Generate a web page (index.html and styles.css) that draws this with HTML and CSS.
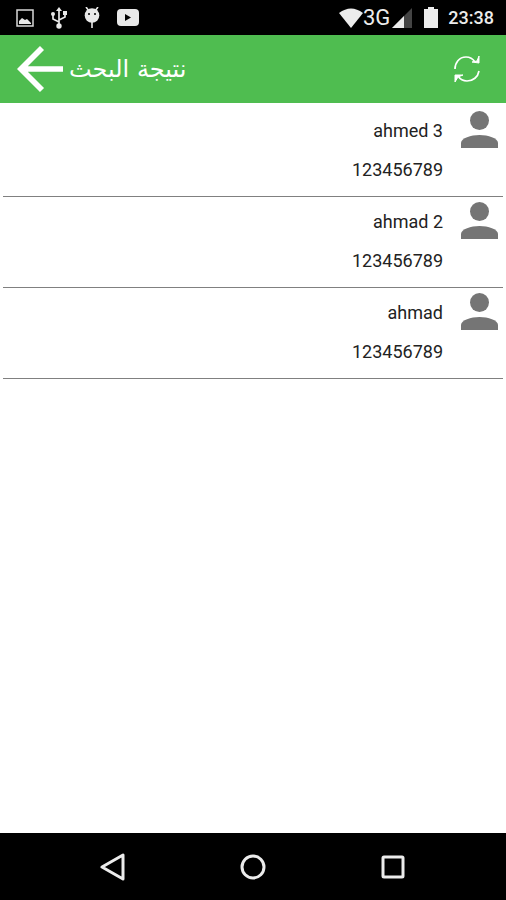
FILE: index.html
```html
<!DOCTYPE html>
<html lang="ar">
<head>
<meta charset="utf-8">
<meta name="viewport" content="width=device-width, initial-scale=1">
<title>نتيجة البحث</title>
<link rel="stylesheet" href="styles.css">
</head>
<body>
<div class="status">
  <div class="notices">
    <svg width="18" height="18" viewBox="0 0 18 18"><path d="M1 1h16v16H1z" fill="none" stroke="#d8d8d8" stroke-width="1.5"/><path d="M3 15v-3l3-3 3 2 2-1 4 4v1z" fill="#e8e8e8"/></svg>
    <svg width="16" height="22" viewBox="0 0 16 22"><path d="M8 3v16M8 15L2 12V7M8 13l6-3V6" fill="none" stroke="#e8e8e8" stroke-width="1.7"/><path d="M8 0l3 4H5z" fill="#e8e8e8"/><circle cx="8" cy="19" r="2.7" fill="#e8e8e8"/><circle cx="2" cy="7" r="2" fill="#e8e8e8"/><path d="M12 4h4v4h-4z" fill="#e8e8e8"/></svg>
    <svg width="16" height="22" viewBox="0 0 16 22"><path d="M2 0l3 4M14 0l-3 4M8 15v6" fill="none" stroke="#e8e8e8" stroke-width="1.6"/><circle cx="8" cy="8.500" r="7.300" fill="#e8e8e8"/><circle cx="5" cy="7" r="1" fill="#000"/><circle cx="11" cy="7" r="1" fill="#000"/></svg>
    <svg width="22" height="17" viewBox="0 0 22 17"><rect width="22" height="17" rx="4" fill="#e8e8e8"/><path d="M8 5l6 3.500-6 3.500z" fill="#000"/></svg>
  </div>
  <div class="system">
    <svg width="24" height="20" viewBox="0 0 24 20"><path d="M0 5Q12-4 24 5L12 20z" fill="#ececec"/></svg>
    <span class="network">3G</span>
    <svg class="signal" width="20" height="20" viewBox="0 0 20 20"><path d="M20 0v20H0z" fill="#444"/><path d="M12 8v12H0z" fill="#ececec"/></svg>
    <svg class="battery" width="14" height="21" viewBox="0 0 14 21"><path d="M4 0h6v2h4v19H0V2h4z" fill="#ececec"/></svg>
    <time class="clock">23:38</time>
  </div>
</div>
<header class="bar">
  <button class="back" type="button" aria-label="رجوع"><svg width="46" height="46" viewBox="0 0 46 46"><path d="M25 2L4 23l21 21M4 23h42" fill="none" stroke="#fff" stroke-width="5.700"/></svg></button>
  <h1 class="title" dir="rtl">نتيجة البحث</h1>
  <button class="refresh" type="button" aria-label="تحديث"><svg width="26" height="26" viewBox="0 0 26 26" fill="none" stroke="#fff" stroke-width="1.700"><path d="M1 13C1 7 5 1 12 1c4 0 7 2 9 5M25 15c-1 6-6 10-12 10-4 0-7-2-9-5"/><path d="M25 0v7l-7-1 5-1zM1 26v-7l8 0-5 2z" fill="#fff" stroke-width="1"/></svg></button>
</header>
<main class="results">
  <ul class="list">
    <li class="contact">
      <div class="details"><p class="line">ahmed 3</p><p class="line">123456789</p></div>
      <svg class="avatar" width="37" height="37" viewBox="0 0 37 37"><circle cx="18.500" cy="9.500" r="9.500"/><path d="M0 37v-5c0-5 10-8 18.500-8S37 27 37 32v5z"/></svg>
    </li>
    <li class="contact">
      <div class="details"><p class="line">ahmad 2</p><p class="line">123456789</p></div>
      <svg class="avatar" width="37" height="37" viewBox="0 0 37 37"><circle cx="18.500" cy="9.500" r="9.500"/><path d="M0 37v-5c0-5 10-8 18.500-8S37 27 37 32v5z"/></svg>
    </li>
    <li class="contact">
      <div class="details"><p class="line">ahmad</p><p class="line">123456789</p></div>
      <svg class="avatar" width="37" height="37" viewBox="0 0 37 37"><circle cx="18.500" cy="9.500" r="9.500"/><path d="M0 37v-5c0-5 10-8 18.500-8S37 27 37 32v5z"/></svg>
    </li>
  </ul>
</main>
<nav class="keys">
  <button type="button" aria-label="Back"><svg width="28" height="28" viewBox="0 0 28 28"><path d="M24 2v24L3 14z"/></svg></button>
  <button type="button" aria-label="Home"><svg width="28" height="28" viewBox="0 0 28 28"><circle cx="14" cy="14" r="11"/></svg></button>
  <button type="button" aria-label="Recent apps"><svg width="28" height="28" viewBox="0 0 28 28"><rect x="4" y="4" width="20" height="20" rx="1"/></svg></button>
</nav>
</body>
</html>
```
FILE: styles.css
```css
* {
  box-sizing: border-box;
}

body {
  margin: 0;
  min-height: 100vh;
  display: flex;
  flex-direction: column;
  background: #fff;
  font-family: Roboto, "DejaVu Sans", sans-serif;
}

svg {
  display: block;
  flex: none;
}

button {
  padding: 0;
  border: 0;
  background: none;
  cursor: pointer;
}

.status {
  display: flex;
  justify-content: space-between;
  height: 35px;
  padding: 0 12px 0 16px;
  background: #000;
  color: #ececec;
}

.notices,
.system {
  display: flex;
  align-items: center;
}

.notices {
  gap: 17px;
}

.network {
  font-size: 22px;
  line-height: 35px;
}

.signal {
  margin-left: 2px;
}

.battery {
  margin: 0 10px 0 12px;
}

.clock {
  font-size: 18px;
  font-weight: 500;
}

.bar {
  display: flex;
  align-items: center;
  height: 68px;
  padding: 0 26px 0 17px;
  background: #4fbd50;
}

.title {
  margin: 0 auto 0 6px;
  color: #fff;
  font-family: "DejaVu Sans", sans-serif;
  font-size: 24px;
  font-weight: 400;
  line-height: 32px;
}

.results {
  flex: 1;
  padding: 3px;
}

.list {
  margin: 0;
  padding: 0;
  list-style: none;
}

.contact {
  display: flex;
  justify-content: flex-end;
  gap: 18px;
  height: 91px;
  padding: 5px 5px 0 0;
  border-bottom: 1px solid #808080;
}

.details {
  text-align: right;
}

.line {
  margin: 0;
  color: #222;
  font-size: 18px;
  line-height: 39px;
}

.avatar {
  fill: #757575;
}

.keys {
  display: flex;
  justify-content: center;
  gap: 112px;
  height: 67px;
  background: #000;
}

.keys svg {
  fill: none;
  stroke: #ececec;
  stroke-width: 3;
  stroke-linejoin: round;
}
```
